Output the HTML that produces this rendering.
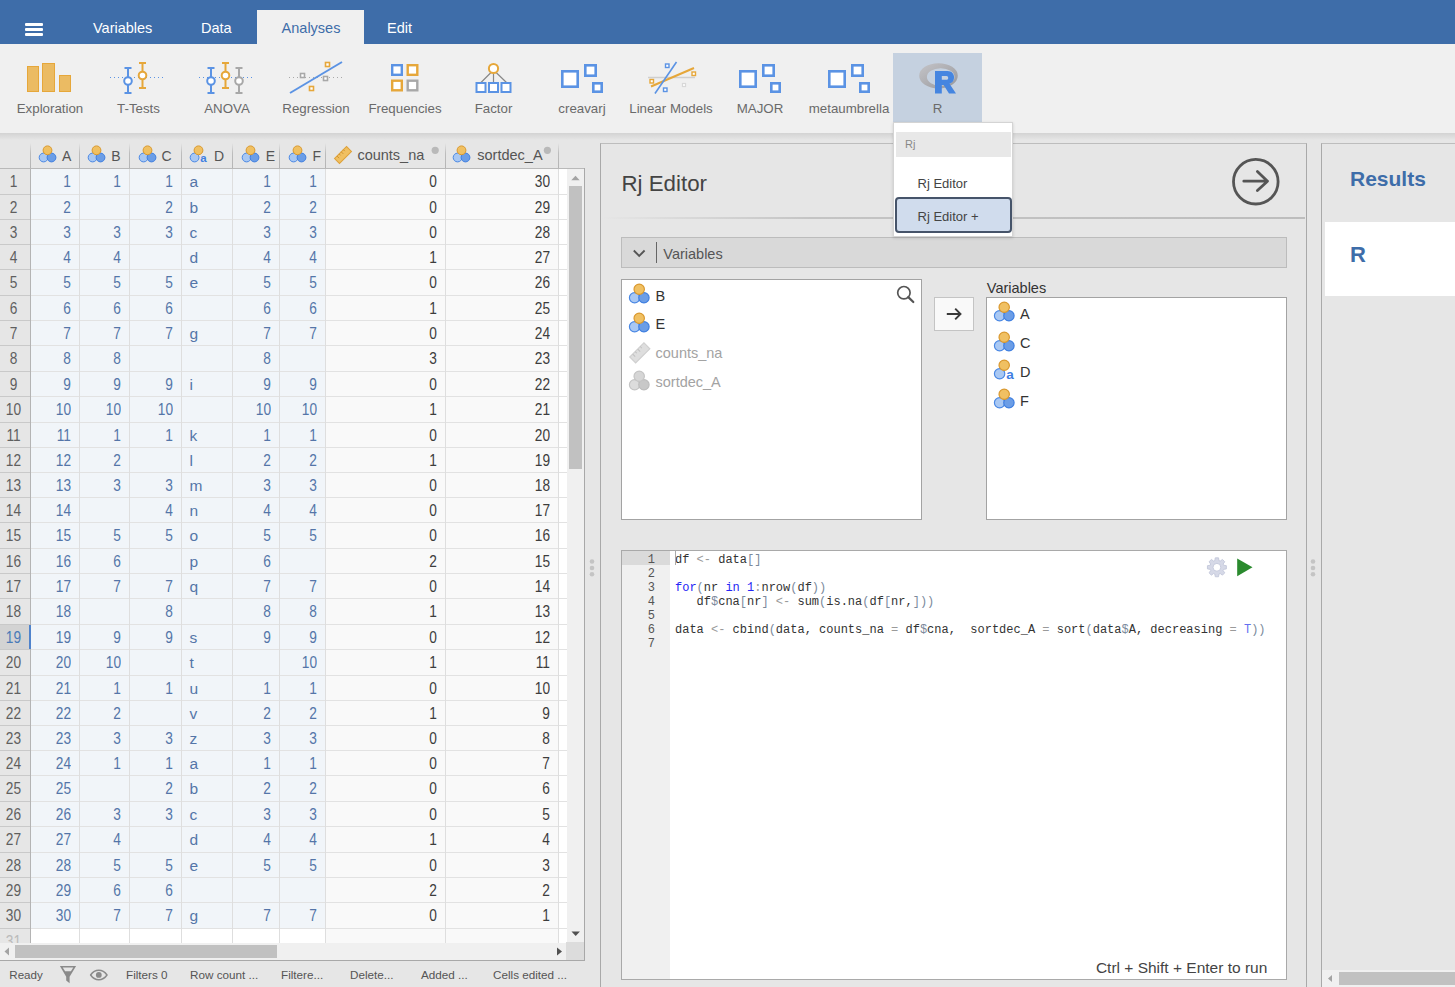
<!DOCTYPE html><html><head><meta charset="utf-8"><style>
*{box-sizing:border-box;margin:0;padding:0}
html,body{width:1455px;height:987px;overflow:hidden;background:#e6e6e6;font-family:"Liberation Sans",sans-serif;position:relative}
.abs{position:absolute}
.t{position:absolute;white-space:nowrap}
</style></head><body>
<div class="abs" style="left:0;top:0;width:1455px;height:44px;background:#3e6da9"></div><div class="abs" style="left:25px;top:23px;width:18px;height:3px;background:#fff;border-radius:1px"></div><div class="abs" style="left:25px;top:28px;width:18px;height:3px;background:#fff;border-radius:1px"></div><div class="abs" style="left:25px;top:33px;width:18px;height:3px;background:#fff;border-radius:1px"></div><div class="abs" style="left:257px;top:10px;width:107px;height:34px;background:#f0f0f0"></div><div class="t" style="left:93px;top:19.76px;font-size:14.5px;color:#fff;">Variables</div><div class="t" style="left:201px;top:19.76px;font-size:14.5px;color:#fff;">Data</div><div class="t" style="left:281.6px;top:19.76px;font-size:14.5px;color:#3e6da9;">Analyses</div><div class="t" style="left:387px;top:19.76px;font-size:14.5px;color:#fff;">Edit</div><div class="abs" style="left:0;top:44px;width:1455px;height:89px;background:#f0f0f0"></div><div class="abs" style="left:0;top:133px;width:1455px;height:7px;background:linear-gradient(#d3d3d3,#e6e6e6)"></div><div class="abs" style="left:893px;top:53px;width:89px;height:70px;background:#c5d1e0"></div><div class="t" style="left:-10px;top:101.46px;font-size:13.3px;color:#6a6a6a;width:120px;text-align:center">Exploration</div><div class="t" style="left:78.5px;top:101.46px;font-size:13.3px;color:#6a6a6a;width:120px;text-align:center">T-Tests</div><div class="t" style="left:167px;top:101.46px;font-size:13.3px;color:#6a6a6a;width:120px;text-align:center">ANOVA</div><div class="t" style="left:256px;top:101.46px;font-size:13.3px;color:#6a6a6a;width:120px;text-align:center">Regression</div><div class="t" style="left:345px;top:101.46px;font-size:13.3px;color:#6a6a6a;width:120px;text-align:center">Frequencies</div><div class="t" style="left:433.5px;top:101.46px;font-size:13.3px;color:#6a6a6a;width:120px;text-align:center">Factor</div><div class="t" style="left:522px;top:101.46px;font-size:13.3px;color:#6a6a6a;width:120px;text-align:center">creavarj</div><div class="t" style="left:611px;top:101.46px;font-size:13.3px;color:#6a6a6a;width:120px;text-align:center">Linear Models</div><div class="t" style="left:700px;top:101.46px;font-size:13.3px;color:#6a6a6a;width:120px;text-align:center">MAJOR</div><div class="t" style="left:789px;top:101.46px;font-size:13.3px;color:#6a6a6a;width:120px;text-align:center">metaumbrella</div><div class="t" style="left:877.5px;top:101.46px;font-size:13.3px;color:#6a6a6a;width:120px;text-align:center">R</div><svg class="abs" style="left:0;top:0" width="1455" height="140"><rect x="27.5" y="66.5" width="11" height="25" fill="#ebbb63" stroke="#e6a73a"/><rect x="42.5" y="63.5" width="12" height="28" fill="#ebbb63" stroke="#e6a73a"/><rect x="59.5" y="75.5" width="11" height="16" fill="#ebbb63" stroke="#e6a73a"/><path d="M110 77.5h54" stroke="#5b93e4" stroke-width="1" stroke-dasharray="1 3"/><path d="M128 68v25M124.5 68h7M124.5 93h7" stroke="#5b93e4" stroke-width="2" fill="none"/><circle cx="128" cy="81" r="3.8" fill="#fff" stroke="#5b93e4" stroke-width="2"/><path d="M142.5 63v25M139.0 63h7M139.0 88h7" stroke="#e6a73a" stroke-width="2" fill="none"/><circle cx="142.5" cy="75.5" r="3.8" fill="#fff" stroke="#e6a73a" stroke-width="2"/><path d="M199 77.5h54" stroke="#5b93e4" stroke-width="1" stroke-dasharray="1 3"/><path d="M211 68v25M207.5 68h7M207.5 93h7" stroke="#5b93e4" stroke-width="2" fill="none"/><circle cx="211" cy="81" r="3.8" fill="#fff" stroke="#5b93e4" stroke-width="2"/><path d="M225.5 63v25M222.0 63h7M222.0 88h7" stroke="#e6a73a" stroke-width="2" fill="none"/><circle cx="225.5" cy="75.5" r="3.8" fill="#fff" stroke="#e6a73a" stroke-width="2"/><path d="M239 68v25M235.5 68h7M235.5 93h7" stroke="#a8a8a8" stroke-width="2" fill="none"/><circle cx="239" cy="81" r="3.8" fill="#fff" stroke="#a8a8a8" stroke-width="2"/><path d="M289 77.5h54" stroke="#a8a8a8" stroke-width="1" stroke-dasharray="1 3"/><path d="M290 93L342 62" stroke="#5b93e4" stroke-width="2"/><rect x="300.5" y="73.5" width="4" height="4" fill="#fff" stroke="#a8a8a8" stroke-width="1.6"/><rect x="323.5" y="76.5" width="4" height="4" fill="#fff" stroke="#a8a8a8" stroke-width="1.6"/><rect x="309.5" y="86.5" width="4" height="4" fill="#fff" stroke="#e6a73a" stroke-width="1.6"/><rect x="325.5" y="62.5" width="4" height="4" fill="#fff" stroke="#e6a73a" stroke-width="1.6"/><rect x="392.2" y="65.2" width="9.6" height="9.6" fill="#fff" stroke="#5b93e4" stroke-width="2.4"/><rect x="407.7" y="65.2" width="9.6" height="9.6" fill="#fff" stroke="#e6a73a" stroke-width="2.4"/><rect x="392.2" y="80.7" width="9.6" height="9.6" fill="#fff" stroke="#e6a73a" stroke-width="2.4"/><rect x="407.7" y="80.7" width="9.6" height="9.6" fill="#fff" stroke="#a8a8a8" stroke-width="2.4"/><path d="M493.5 70L480.5 83M493.5 70V83M493.5 70L507 83" stroke="#888" stroke-width="1.2"/><circle cx="493.5" cy="68.5" r="4.6" fill="#fff" stroke="#e6a73a" stroke-width="2"/><rect x="476.5" y="83.0" width="9" height="9" fill="#fff" stroke="#5b93e4" stroke-width="2"/><rect x="489.0" y="83.0" width="9" height="9" fill="#fff" stroke="#5b93e4" stroke-width="2"/><rect x="501.5" y="83.0" width="9" height="9" fill="#fff" stroke="#5b93e4" stroke-width="2"/><rect x="562.3" y="71.3" width="15.4" height="15.4" fill="#fff" stroke="#5b93e4" stroke-width="2.6"/><rect x="585.3" y="65.3" width="10.4" height="10.4" fill="#fff" stroke="#5b93e4" stroke-width="2.6"/><rect x="593.3" y="83.3" width="8.4" height="8.4" fill="#fff" stroke="#5b93e4" stroke-width="2.6"/><rect x="740.3" y="71.3" width="15.4" height="15.4" fill="#fff" stroke="#5b93e4" stroke-width="2.6"/><rect x="763.3" y="65.3" width="10.4" height="10.4" fill="#fff" stroke="#5b93e4" stroke-width="2.6"/><rect x="771.3" y="83.3" width="8.4" height="8.4" fill="#fff" stroke="#5b93e4" stroke-width="2.6"/><rect x="829.3" y="71.3" width="15.4" height="15.4" fill="#fff" stroke="#5b93e4" stroke-width="2.6"/><rect x="852.3" y="65.3" width="10.4" height="10.4" fill="#fff" stroke="#5b93e4" stroke-width="2.6"/><rect x="860.3" y="83.3" width="8.4" height="8.4" fill="#fff" stroke="#5b93e4" stroke-width="2.6"/><path d="M648 77.5h47" stroke="#cfcfcf" stroke-width="1.4"/><path d="M651 86.5L694 68" stroke="#e6a73a" stroke-width="2"/><path d="M655 93.5L676.5 62" stroke="#5b93e4" stroke-width="1.6"/><rect x="650" y="79.5" width="3.5" height="3.5" fill="#fff" stroke="#e6a73a" stroke-width="1.4"/><rect x="692" y="72" width="3.5" height="3.5" fill="#fff" stroke="#e6a73a" stroke-width="1.4"/><rect x="665.5" y="64" width="3.5" height="3.5" fill="#fff" stroke="#5b93e4" stroke-width="1.4"/><rect x="663.5" y="88" width="3.5" height="3.5" fill="#fff" stroke="#5b93e4" stroke-width="1.4"/><rect x="682.5" y="83.5" width="3" height="3" fill="#fff" stroke="#d8d8d8" stroke-width="1.2"/><defs><linearGradient id="rg" x1="0" y1="0" x2="1" y2="1"><stop offset="0" stop-color="#c4c4c8"/><stop offset="1" stop-color="#98989c"/></linearGradient></defs><path fill-rule="evenodd" fill="url(#rg)" d="M919.2 75.8a19.3 12.6 0 1 0 38.6 0a19.3 12.6 0 1 0 -38.6 0ZM926.9 77a13.8 8.7 0 1 0 27.6 0a13.8 8.7 0 1 0 -27.6 0Z"/><path fill-rule="evenodd" fill="#4585e0" d="M935 71.1H947.5C951.8 71.1 954.1 74 954.1 77.4C954.1 80.4 952.4 82.8 949.5 83.7L956 93.4H949L943.6 84.9H941.8V93.4H935ZM941.8 76H946.5C947.6 76 948.2 76.8 948.2 77.9C948.2 79 947.6 79.8 946.5 79.8H941.8Z"/></svg><div class="abs" style="left:0;top:143px;width:567px;height:26px;background:#e6e6e6"></div><div class="abs" style="left:30px;top:143px;width:1px;height:25px;background:linear-gradient(rgba(190,190,190,0),#bdbdbd 40%,#b4b4b4)"></div><div class="abs" style="left:79px;top:143px;width:1px;height:25px;background:linear-gradient(rgba(190,190,190,0),#bdbdbd 40%,#b4b4b4)"></div><div class="abs" style="left:129px;top:143px;width:1px;height:25px;background:linear-gradient(rgba(190,190,190,0),#bdbdbd 40%,#b4b4b4)"></div><div class="abs" style="left:181px;top:143px;width:1px;height:25px;background:linear-gradient(rgba(190,190,190,0),#bdbdbd 40%,#b4b4b4)"></div><div class="abs" style="left:232px;top:143px;width:1px;height:25px;background:linear-gradient(rgba(190,190,190,0),#bdbdbd 40%,#b4b4b4)"></div><div class="abs" style="left:279px;top:143px;width:1px;height:25px;background:linear-gradient(rgba(190,190,190,0),#bdbdbd 40%,#b4b4b4)"></div><div class="abs" style="left:325px;top:143px;width:1px;height:25px;background:linear-gradient(rgba(190,190,190,0),#bdbdbd 40%,#b4b4b4)"></div><div class="abs" style="left:445px;top:143px;width:1px;height:25px;background:linear-gradient(rgba(190,190,190,0),#bdbdbd 40%,#b4b4b4)"></div><div class="abs" style="left:558px;top:143px;width:1px;height:25px;background:linear-gradient(rgba(190,190,190,0),#bdbdbd 40%,#b4b4b4)"></div><div class="abs" style="left:0;top:168px;width:585px;height:1px;background:#b9b9b9"></div><div class="abs" style="left:37.8px;top:145.3px"><svg width="20.00" height="18.00" viewBox="0 0 20 18" style="display:block"><circle cx="5.6" cy="12.5" r="4.4" fill="#a9c8f3" stroke="#4a88e4" stroke-width="1"/><circle cx="13.5" cy="12.5" r="4.4" fill="#6b9de6" stroke="#3f7fe0" stroke-width="1"/><circle cx="9.5" cy="5.3" r="4.4" fill="#f0c062" stroke="#d9982e" stroke-width="1"/></svg></div><div class="t" style="left:62px;top:147.92px;font-size:14px;color:#555;">A</div><div class="abs" style="left:86.5px;top:145.3px"><svg width="20.00" height="18.00" viewBox="0 0 20 18" style="display:block"><circle cx="5.6" cy="12.5" r="4.4" fill="#a9c8f3" stroke="#4a88e4" stroke-width="1"/><circle cx="13.5" cy="12.5" r="4.4" fill="#6b9de6" stroke="#3f7fe0" stroke-width="1"/><circle cx="9.5" cy="5.3" r="4.4" fill="#f0c062" stroke="#d9982e" stroke-width="1"/></svg></div><div class="t" style="left:111.3px;top:147.92px;font-size:14px;color:#555;">B</div><div class="abs" style="left:137.8px;top:145.3px"><svg width="20.00" height="18.00" viewBox="0 0 20 18" style="display:block"><circle cx="5.6" cy="12.5" r="4.4" fill="#a9c8f3" stroke="#4a88e4" stroke-width="1"/><circle cx="13.5" cy="12.5" r="4.4" fill="#6b9de6" stroke="#3f7fe0" stroke-width="1"/><circle cx="9.5" cy="5.3" r="4.4" fill="#f0c062" stroke="#d9982e" stroke-width="1"/></svg></div><div class="t" style="left:161.5px;top:147.92px;font-size:14px;color:#555;">C</div><div class="abs" style="left:188.8px;top:145.3px"><svg width="20.00" height="18.00" viewBox="0 0 20 18" style="display:block"><circle cx="5.6" cy="12.5" r="4.4" fill="#a9c8f3" stroke="#4a88e4" stroke-width="1"/><text x="11.2" y="17" font-family="Liberation Sans" font-weight="bold" font-size="11.5" fill="#3f80e2">a</text><circle cx="9.5" cy="5.3" r="4.4" fill="#f0c062" stroke="#d9982e" stroke-width="1"/></svg></div><div class="t" style="left:214px;top:147.92px;font-size:14px;color:#555;">D</div><div class="abs" style="left:240.9px;top:145.3px"><svg width="20.00" height="18.00" viewBox="0 0 20 18" style="display:block"><circle cx="5.6" cy="12.5" r="4.4" fill="#a9c8f3" stroke="#4a88e4" stroke-width="1"/><circle cx="13.5" cy="12.5" r="4.4" fill="#6b9de6" stroke="#3f7fe0" stroke-width="1"/><circle cx="9.5" cy="5.3" r="4.4" fill="#f0c062" stroke="#d9982e" stroke-width="1"/></svg></div><div class="t" style="left:265.7px;top:147.92px;font-size:14px;color:#555;">E</div><div class="abs" style="left:288.0px;top:145.3px"><svg width="20.00" height="18.00" viewBox="0 0 20 18" style="display:block"><circle cx="5.6" cy="12.5" r="4.4" fill="#a9c8f3" stroke="#4a88e4" stroke-width="1"/><circle cx="13.5" cy="12.5" r="4.4" fill="#6b9de6" stroke="#3f7fe0" stroke-width="1"/><circle cx="9.5" cy="5.3" r="4.4" fill="#f0c062" stroke="#d9982e" stroke-width="1"/></svg></div><div class="t" style="left:312.6px;top:147.92px;font-size:14px;color:#555;">F</div><div class="abs" style="left:332.8px;top:145.3px"><svg width="20.00" height="20.00" viewBox="0 0 20 20" style="display:block"><g transform="rotate(-45 10 10)"><rect x="1.5" y="6.5" width="17" height="7" fill="#f0c062" stroke="#dea13a"/><path d="M5 6.5v3M8 6.5v2M11 6.5v3M14 6.5v2" stroke="#c88a2a" stroke-width="0.8"/></g></svg></div><div class="t" style="left:357.4px;top:147.46px;font-size:14.5px;color:#555;">counts_na</div><div class="abs" style="left:452.4px;top:145.3px"><svg width="20.00" height="18.00" viewBox="0 0 20 18" style="display:block"><circle cx="5.6" cy="12.5" r="4.4" fill="#a9c8f3" stroke="#4a88e4" stroke-width="1"/><circle cx="13.5" cy="12.5" r="4.4" fill="#6b9de6" stroke="#3f7fe0" stroke-width="1"/><circle cx="9.5" cy="5.3" r="4.4" fill="#f0c062" stroke="#d9982e" stroke-width="1"/></svg></div><div class="t" style="left:477.3px;top:147.46px;font-size:14.5px;color:#555;">sortdec_A</div><div class="abs" style="left:31px;top:169px;width:49px;height:759px;background:#f1f5f9"></div><div class="abs" style="left:80px;top:169px;width:50px;height:759px;background:#f1f5f9"></div><div class="abs" style="left:130px;top:169px;width:52px;height:759px;background:#f1f5f9"></div><div class="abs" style="left:182px;top:169px;width:51px;height:759px;background:#f1f5f9"></div><div class="abs" style="left:233px;top:169px;width:47px;height:759px;background:#f1f5f9"></div><div class="abs" style="left:280px;top:169px;width:46px;height:759px;background:#f1f5f9"></div><div class="abs" style="left:326px;top:169px;width:120px;height:759px;background:#f9f9f9"></div><div class="abs" style="left:446px;top:169px;width:113px;height:759px;background:#f9f9f9"></div><div class="abs" style="left:31px;top:929px;width:295px;height:14px;background:#fff"></div><div class="abs" style="left:326px;top:929px;width:232px;height:14px;background:#f9f9f9"></div><div class="abs" style="left:558px;top:169px;width:9px;height:774px;background:#fff"></div><div class="abs" style="left:0;top:169px;width:30px;height:774px;background:#e6e6e6"></div><div class="abs" style="left:0;top:194px;width:30px;height:1px;background:#c9c9c9"></div><div class="abs" style="left:31px;top:194px;width:536px;height:1px;background:#e2e2e2"></div><div class="abs" style="left:0;top:219px;width:30px;height:1px;background:#c9c9c9"></div><div class="abs" style="left:31px;top:219px;width:536px;height:1px;background:#e2e2e2"></div><div class="abs" style="left:0;top:244px;width:30px;height:1px;background:#c9c9c9"></div><div class="abs" style="left:31px;top:244px;width:536px;height:1px;background:#e2e2e2"></div><div class="abs" style="left:0;top:269px;width:30px;height:1px;background:#c9c9c9"></div><div class="abs" style="left:31px;top:269px;width:536px;height:1px;background:#e2e2e2"></div><div class="abs" style="left:0;top:295px;width:30px;height:1px;background:#c9c9c9"></div><div class="abs" style="left:31px;top:295px;width:536px;height:1px;background:#e2e2e2"></div><div class="abs" style="left:0;top:320px;width:30px;height:1px;background:#c9c9c9"></div><div class="abs" style="left:31px;top:320px;width:536px;height:1px;background:#e2e2e2"></div><div class="abs" style="left:0;top:345px;width:30px;height:1px;background:#c9c9c9"></div><div class="abs" style="left:31px;top:345px;width:536px;height:1px;background:#e2e2e2"></div><div class="abs" style="left:0;top:371px;width:30px;height:1px;background:#c9c9c9"></div><div class="abs" style="left:31px;top:371px;width:536px;height:1px;background:#e2e2e2"></div><div class="abs" style="left:0;top:396px;width:30px;height:1px;background:#c9c9c9"></div><div class="abs" style="left:31px;top:396px;width:536px;height:1px;background:#e2e2e2"></div><div class="abs" style="left:0;top:422px;width:30px;height:1px;background:#c9c9c9"></div><div class="abs" style="left:31px;top:422px;width:536px;height:1px;background:#e2e2e2"></div><div class="abs" style="left:0;top:447px;width:30px;height:1px;background:#c9c9c9"></div><div class="abs" style="left:31px;top:447px;width:536px;height:1px;background:#e2e2e2"></div><div class="abs" style="left:0;top:472px;width:30px;height:1px;background:#c9c9c9"></div><div class="abs" style="left:31px;top:472px;width:536px;height:1px;background:#e2e2e2"></div><div class="abs" style="left:0;top:497px;width:30px;height:1px;background:#c9c9c9"></div><div class="abs" style="left:31px;top:497px;width:536px;height:1px;background:#e2e2e2"></div><div class="abs" style="left:0;top:522px;width:30px;height:1px;background:#c9c9c9"></div><div class="abs" style="left:31px;top:522px;width:536px;height:1px;background:#e2e2e2"></div><div class="abs" style="left:0;top:548px;width:30px;height:1px;background:#c9c9c9"></div><div class="abs" style="left:31px;top:548px;width:536px;height:1px;background:#e2e2e2"></div><div class="abs" style="left:0;top:573px;width:30px;height:1px;background:#c9c9c9"></div><div class="abs" style="left:31px;top:573px;width:536px;height:1px;background:#e2e2e2"></div><div class="abs" style="left:0;top:598px;width:30px;height:1px;background:#c9c9c9"></div><div class="abs" style="left:31px;top:598px;width:536px;height:1px;background:#e2e2e2"></div><div class="abs" style="left:0;top:624px;width:30px;height:1px;background:#c9c9c9"></div><div class="abs" style="left:31px;top:624px;width:536px;height:1px;background:#e2e2e2"></div><div class="abs" style="left:0;top:649px;width:30px;height:1px;background:#c9c9c9"></div><div class="abs" style="left:31px;top:649px;width:536px;height:1px;background:#e2e2e2"></div><div class="abs" style="left:0;top:675px;width:30px;height:1px;background:#c9c9c9"></div><div class="abs" style="left:31px;top:675px;width:536px;height:1px;background:#e2e2e2"></div><div class="abs" style="left:0;top:700px;width:30px;height:1px;background:#c9c9c9"></div><div class="abs" style="left:31px;top:700px;width:536px;height:1px;background:#e2e2e2"></div><div class="abs" style="left:0;top:725px;width:30px;height:1px;background:#c9c9c9"></div><div class="abs" style="left:31px;top:725px;width:536px;height:1px;background:#e2e2e2"></div><div class="abs" style="left:0;top:750px;width:30px;height:1px;background:#c9c9c9"></div><div class="abs" style="left:31px;top:750px;width:536px;height:1px;background:#e2e2e2"></div><div class="abs" style="left:0;top:775px;width:30px;height:1px;background:#c9c9c9"></div><div class="abs" style="left:31px;top:775px;width:536px;height:1px;background:#e2e2e2"></div><div class="abs" style="left:0;top:801px;width:30px;height:1px;background:#c9c9c9"></div><div class="abs" style="left:31px;top:801px;width:536px;height:1px;background:#e2e2e2"></div><div class="abs" style="left:0;top:826px;width:30px;height:1px;background:#c9c9c9"></div><div class="abs" style="left:31px;top:826px;width:536px;height:1px;background:#e2e2e2"></div><div class="abs" style="left:0;top:852px;width:30px;height:1px;background:#c9c9c9"></div><div class="abs" style="left:31px;top:852px;width:536px;height:1px;background:#e2e2e2"></div><div class="abs" style="left:0;top:877px;width:30px;height:1px;background:#c9c9c9"></div><div class="abs" style="left:31px;top:877px;width:536px;height:1px;background:#e2e2e2"></div><div class="abs" style="left:0;top:902px;width:30px;height:1px;background:#c9c9c9"></div><div class="abs" style="left:31px;top:902px;width:536px;height:1px;background:#e2e2e2"></div><div class="abs" style="left:0;top:928px;width:30px;height:1px;background:#c9c9c9"></div><div class="abs" style="left:31px;top:928px;width:536px;height:1px;background:#e2e2e2"></div><div class="abs" style="left:79px;top:169px;width:1px;height:774px;background:#dedede"></div><div class="abs" style="left:129px;top:169px;width:1px;height:774px;background:#dedede"></div><div class="abs" style="left:181px;top:169px;width:1px;height:774px;background:#dedede"></div><div class="abs" style="left:232px;top:169px;width:1px;height:774px;background:#dedede"></div><div class="abs" style="left:279px;top:169px;width:1px;height:774px;background:#dedede"></div><div class="abs" style="left:325px;top:169px;width:1px;height:774px;background:#dedede"></div><div class="abs" style="left:445px;top:169px;width:1px;height:774px;background:#dedede"></div><div class="abs" style="left:558px;top:169px;width:1px;height:774px;background:#dedede"></div><div class="abs" style="left:30px;top:169px;width:1px;height:774px;background:#b4b4b4"></div><div class="abs" style="left:0;top:625px;width:30px;height:24px;background:#d3d3d3"></div><div class="abs" style="left:29px;top:625px;width:2px;height:24px;background:#4f83cc"></div><style>.cr{position:absolute;white-space:nowrap;font-size:16.5px;line-height:18px;transform:scaleX(.83);transform-origin:100% 50%;text-align:right}.cl{position:absolute;white-space:nowrap;font-size:15.5px;line-height:18px}.cc{position:absolute;white-space:nowrap;font-size:16.5px;line-height:18px;transform:scaleX(.83);text-align:center}</style><div class="cc" style="left:0;width:27px;top:172.3px;color:#5f5f5f">1</div><div class="cr" style="left:30px;width:41px;top:172.3px;color:#5475a8">1</div><div class="cr" style="left:79px;width:42px;top:172.3px;color:#5475a8">1</div><div class="cr" style="left:129px;width:44px;top:172.3px;color:#5475a8">1</div><div class="cl" style="left:189.5px;top:172.7px;color:#5475a8">a</div><div class="cr" style="left:232px;width:39px;top:172.3px;color:#5475a8">1</div><div class="cr" style="left:279px;width:38px;top:172.3px;color:#5475a8">1</div><div class="cr" style="left:325px;width:112px;top:172.3px;color:#3d3d3d">0</div><div class="cr" style="left:445px;width:105px;top:172.3px;color:#3d3d3d">30</div><div class="cc" style="left:0;width:27px;top:198.3px;color:#5f5f5f">2</div><div class="cr" style="left:30px;width:41px;top:198.3px;color:#5475a8">2</div><div class="cr" style="left:129px;width:44px;top:198.3px;color:#5475a8">2</div><div class="cl" style="left:189.5px;top:198.7px;color:#5475a8">b</div><div class="cr" style="left:232px;width:39px;top:198.3px;color:#5475a8">2</div><div class="cr" style="left:279px;width:38px;top:198.3px;color:#5475a8">2</div><div class="cr" style="left:325px;width:112px;top:198.3px;color:#3d3d3d">0</div><div class="cr" style="left:445px;width:105px;top:198.3px;color:#3d3d3d">29</div><div class="cc" style="left:0;width:27px;top:223.3px;color:#5f5f5f">3</div><div class="cr" style="left:30px;width:41px;top:223.3px;color:#5475a8">3</div><div class="cr" style="left:79px;width:42px;top:223.3px;color:#5475a8">3</div><div class="cr" style="left:129px;width:44px;top:223.3px;color:#5475a8">3</div><div class="cl" style="left:189.5px;top:223.7px;color:#5475a8">c</div><div class="cr" style="left:232px;width:39px;top:223.3px;color:#5475a8">3</div><div class="cr" style="left:279px;width:38px;top:223.3px;color:#5475a8">3</div><div class="cr" style="left:325px;width:112px;top:223.3px;color:#3d3d3d">0</div><div class="cr" style="left:445px;width:105px;top:223.3px;color:#3d3d3d">28</div><div class="cc" style="left:0;width:27px;top:248.3px;color:#5f5f5f">4</div><div class="cr" style="left:30px;width:41px;top:248.3px;color:#5475a8">4</div><div class="cr" style="left:79px;width:42px;top:248.3px;color:#5475a8">4</div><div class="cl" style="left:189.5px;top:248.7px;color:#5475a8">d</div><div class="cr" style="left:232px;width:39px;top:248.3px;color:#5475a8">4</div><div class="cr" style="left:279px;width:38px;top:248.3px;color:#5475a8">4</div><div class="cr" style="left:325px;width:112px;top:248.3px;color:#3d3d3d">1</div><div class="cr" style="left:445px;width:105px;top:248.3px;color:#3d3d3d">27</div><div class="cc" style="left:0;width:27px;top:273.3px;color:#5f5f5f">5</div><div class="cr" style="left:30px;width:41px;top:273.3px;color:#5475a8">5</div><div class="cr" style="left:79px;width:42px;top:273.3px;color:#5475a8">5</div><div class="cr" style="left:129px;width:44px;top:273.3px;color:#5475a8">5</div><div class="cl" style="left:189.5px;top:273.6px;color:#5475a8">e</div><div class="cr" style="left:232px;width:39px;top:273.3px;color:#5475a8">5</div><div class="cr" style="left:279px;width:38px;top:273.3px;color:#5475a8">5</div><div class="cr" style="left:325px;width:112px;top:273.3px;color:#3d3d3d">0</div><div class="cr" style="left:445px;width:105px;top:273.3px;color:#3d3d3d">26</div><div class="cc" style="left:0;width:27px;top:299.3px;color:#5f5f5f">6</div><div class="cr" style="left:30px;width:41px;top:299.3px;color:#5475a8">6</div><div class="cr" style="left:79px;width:42px;top:299.3px;color:#5475a8">6</div><div class="cr" style="left:129px;width:44px;top:299.3px;color:#5475a8">6</div><div class="cr" style="left:232px;width:39px;top:299.3px;color:#5475a8">6</div><div class="cr" style="left:279px;width:38px;top:299.3px;color:#5475a8">6</div><div class="cr" style="left:325px;width:112px;top:299.3px;color:#3d3d3d">1</div><div class="cr" style="left:445px;width:105px;top:299.3px;color:#3d3d3d">25</div><div class="cc" style="left:0;width:27px;top:324.3px;color:#5f5f5f">7</div><div class="cr" style="left:30px;width:41px;top:324.3px;color:#5475a8">7</div><div class="cr" style="left:79px;width:42px;top:324.3px;color:#5475a8">7</div><div class="cr" style="left:129px;width:44px;top:324.3px;color:#5475a8">7</div><div class="cl" style="left:189.5px;top:324.6px;color:#5475a8">g</div><div class="cr" style="left:232px;width:39px;top:324.3px;color:#5475a8">7</div><div class="cr" style="left:279px;width:38px;top:324.3px;color:#5475a8">7</div><div class="cr" style="left:325px;width:112px;top:324.3px;color:#3d3d3d">0</div><div class="cr" style="left:445px;width:105px;top:324.3px;color:#3d3d3d">24</div><div class="cc" style="left:0;width:27px;top:349.3px;color:#5f5f5f">8</div><div class="cr" style="left:30px;width:41px;top:349.3px;color:#5475a8">8</div><div class="cr" style="left:79px;width:42px;top:349.3px;color:#5475a8">8</div><div class="cr" style="left:232px;width:39px;top:349.3px;color:#5475a8">8</div><div class="cr" style="left:325px;width:112px;top:349.3px;color:#3d3d3d">3</div><div class="cr" style="left:445px;width:105px;top:349.3px;color:#3d3d3d">23</div><div class="cc" style="left:0;width:27px;top:375.3px;color:#5f5f5f">9</div><div class="cr" style="left:30px;width:41px;top:375.3px;color:#5475a8">9</div><div class="cr" style="left:79px;width:42px;top:375.3px;color:#5475a8">9</div><div class="cr" style="left:129px;width:44px;top:375.3px;color:#5475a8">9</div><div class="cl" style="left:189.5px;top:375.6px;color:#5475a8">i</div><div class="cr" style="left:232px;width:39px;top:375.3px;color:#5475a8">9</div><div class="cr" style="left:279px;width:38px;top:375.3px;color:#5475a8">9</div><div class="cr" style="left:325px;width:112px;top:375.3px;color:#3d3d3d">0</div><div class="cr" style="left:445px;width:105px;top:375.3px;color:#3d3d3d">22</div><div class="cc" style="left:0;width:27px;top:400.3px;color:#5f5f5f">10</div><div class="cr" style="left:30px;width:41px;top:400.3px;color:#5475a8">10</div><div class="cr" style="left:79px;width:42px;top:400.3px;color:#5475a8">10</div><div class="cr" style="left:129px;width:44px;top:400.3px;color:#5475a8">10</div><div class="cr" style="left:232px;width:39px;top:400.3px;color:#5475a8">10</div><div class="cr" style="left:279px;width:38px;top:400.3px;color:#5475a8">10</div><div class="cr" style="left:325px;width:112px;top:400.3px;color:#3d3d3d">1</div><div class="cr" style="left:445px;width:105px;top:400.3px;color:#3d3d3d">21</div><div class="cc" style="left:0;width:27px;top:426.3px;color:#5f5f5f">11</div><div class="cr" style="left:30px;width:41px;top:426.3px;color:#5475a8">11</div><div class="cr" style="left:79px;width:42px;top:426.3px;color:#5475a8">1</div><div class="cr" style="left:129px;width:44px;top:426.3px;color:#5475a8">1</div><div class="cl" style="left:189.5px;top:426.6px;color:#5475a8">k</div><div class="cr" style="left:232px;width:39px;top:426.3px;color:#5475a8">1</div><div class="cr" style="left:279px;width:38px;top:426.3px;color:#5475a8">1</div><div class="cr" style="left:325px;width:112px;top:426.3px;color:#3d3d3d">0</div><div class="cr" style="left:445px;width:105px;top:426.3px;color:#3d3d3d">20</div><div class="cc" style="left:0;width:27px;top:451.3px;color:#5f5f5f">12</div><div class="cr" style="left:30px;width:41px;top:451.3px;color:#5475a8">12</div><div class="cr" style="left:79px;width:42px;top:451.3px;color:#5475a8">2</div><div class="cl" style="left:189.5px;top:451.6px;color:#5475a8">l</div><div class="cr" style="left:232px;width:39px;top:451.3px;color:#5475a8">2</div><div class="cr" style="left:279px;width:38px;top:451.3px;color:#5475a8">2</div><div class="cr" style="left:325px;width:112px;top:451.3px;color:#3d3d3d">1</div><div class="cr" style="left:445px;width:105px;top:451.3px;color:#3d3d3d">19</div><div class="cc" style="left:0;width:27px;top:476.3px;color:#5f5f5f">13</div><div class="cr" style="left:30px;width:41px;top:476.3px;color:#5475a8">13</div><div class="cr" style="left:79px;width:42px;top:476.3px;color:#5475a8">3</div><div class="cr" style="left:129px;width:44px;top:476.3px;color:#5475a8">3</div><div class="cl" style="left:189.5px;top:476.6px;color:#5475a8">m</div><div class="cr" style="left:232px;width:39px;top:476.3px;color:#5475a8">3</div><div class="cr" style="left:279px;width:38px;top:476.3px;color:#5475a8">3</div><div class="cr" style="left:325px;width:112px;top:476.3px;color:#3d3d3d">0</div><div class="cr" style="left:445px;width:105px;top:476.3px;color:#3d3d3d">18</div><div class="cc" style="left:0;width:27px;top:501.3px;color:#5f5f5f">14</div><div class="cr" style="left:30px;width:41px;top:501.3px;color:#5475a8">14</div><div class="cr" style="left:129px;width:44px;top:501.3px;color:#5475a8">4</div><div class="cl" style="left:189.5px;top:501.7px;color:#5475a8">n</div><div class="cr" style="left:232px;width:39px;top:501.3px;color:#5475a8">4</div><div class="cr" style="left:279px;width:38px;top:501.3px;color:#5475a8">4</div><div class="cr" style="left:325px;width:112px;top:501.3px;color:#3d3d3d">0</div><div class="cr" style="left:445px;width:105px;top:501.3px;color:#3d3d3d">17</div><div class="cc" style="left:0;width:27px;top:526.3px;color:#5f5f5f">15</div><div class="cr" style="left:30px;width:41px;top:526.3px;color:#5475a8">15</div><div class="cr" style="left:79px;width:42px;top:526.3px;color:#5475a8">5</div><div class="cr" style="left:129px;width:44px;top:526.3px;color:#5475a8">5</div><div class="cl" style="left:189.5px;top:526.7px;color:#5475a8">o</div><div class="cr" style="left:232px;width:39px;top:526.3px;color:#5475a8">5</div><div class="cr" style="left:279px;width:38px;top:526.3px;color:#5475a8">5</div><div class="cr" style="left:325px;width:112px;top:526.3px;color:#3d3d3d">0</div><div class="cr" style="left:445px;width:105px;top:526.3px;color:#3d3d3d">16</div><div class="cc" style="left:0;width:27px;top:552.3px;color:#5f5f5f">16</div><div class="cr" style="left:30px;width:41px;top:552.3px;color:#5475a8">16</div><div class="cr" style="left:79px;width:42px;top:552.3px;color:#5475a8">6</div><div class="cl" style="left:189.5px;top:552.7px;color:#5475a8">p</div><div class="cr" style="left:232px;width:39px;top:552.3px;color:#5475a8">6</div><div class="cr" style="left:325px;width:112px;top:552.3px;color:#3d3d3d">2</div><div class="cr" style="left:445px;width:105px;top:552.3px;color:#3d3d3d">15</div><div class="cc" style="left:0;width:27px;top:577.3px;color:#5f5f5f">17</div><div class="cr" style="left:30px;width:41px;top:577.3px;color:#5475a8">17</div><div class="cr" style="left:79px;width:42px;top:577.3px;color:#5475a8">7</div><div class="cr" style="left:129px;width:44px;top:577.3px;color:#5475a8">7</div><div class="cl" style="left:189.5px;top:577.7px;color:#5475a8">q</div><div class="cr" style="left:232px;width:39px;top:577.3px;color:#5475a8">7</div><div class="cr" style="left:279px;width:38px;top:577.3px;color:#5475a8">7</div><div class="cr" style="left:325px;width:112px;top:577.3px;color:#3d3d3d">0</div><div class="cr" style="left:445px;width:105px;top:577.3px;color:#3d3d3d">14</div><div class="cc" style="left:0;width:27px;top:602.3px;color:#5f5f5f">18</div><div class="cr" style="left:30px;width:41px;top:602.3px;color:#5475a8">18</div><div class="cr" style="left:129px;width:44px;top:602.3px;color:#5475a8">8</div><div class="cr" style="left:232px;width:39px;top:602.3px;color:#5475a8">8</div><div class="cr" style="left:279px;width:38px;top:602.3px;color:#5475a8">8</div><div class="cr" style="left:325px;width:112px;top:602.3px;color:#3d3d3d">1</div><div class="cr" style="left:445px;width:105px;top:602.3px;color:#3d3d3d">13</div><div class="cc" style="left:0;width:27px;top:628.3px;color:#4a7ab8">19</div><div class="cr" style="left:30px;width:41px;top:628.3px;color:#5475a8">19</div><div class="cr" style="left:79px;width:42px;top:628.3px;color:#5475a8">9</div><div class="cr" style="left:129px;width:44px;top:628.3px;color:#5475a8">9</div><div class="cl" style="left:189.5px;top:628.7px;color:#5475a8">s</div><div class="cr" style="left:232px;width:39px;top:628.3px;color:#5475a8">9</div><div class="cr" style="left:279px;width:38px;top:628.3px;color:#5475a8">9</div><div class="cr" style="left:325px;width:112px;top:628.3px;color:#3d3d3d">0</div><div class="cr" style="left:445px;width:105px;top:628.3px;color:#3d3d3d">12</div><div class="cc" style="left:0;width:27px;top:653.3px;color:#5f5f5f">20</div><div class="cr" style="left:30px;width:41px;top:653.3px;color:#5475a8">20</div><div class="cr" style="left:79px;width:42px;top:653.3px;color:#5475a8">10</div><div class="cl" style="left:189.5px;top:653.7px;color:#5475a8">t</div><div class="cr" style="left:279px;width:38px;top:653.3px;color:#5475a8">10</div><div class="cr" style="left:325px;width:112px;top:653.3px;color:#3d3d3d">1</div><div class="cr" style="left:445px;width:105px;top:653.3px;color:#3d3d3d">11</div><div class="cc" style="left:0;width:27px;top:679.3px;color:#5f5f5f">21</div><div class="cr" style="left:30px;width:41px;top:679.3px;color:#5475a8">21</div><div class="cr" style="left:79px;width:42px;top:679.3px;color:#5475a8">1</div><div class="cr" style="left:129px;width:44px;top:679.3px;color:#5475a8">1</div><div class="cl" style="left:189.5px;top:679.7px;color:#5475a8">u</div><div class="cr" style="left:232px;width:39px;top:679.3px;color:#5475a8">1</div><div class="cr" style="left:279px;width:38px;top:679.3px;color:#5475a8">1</div><div class="cr" style="left:325px;width:112px;top:679.3px;color:#3d3d3d">0</div><div class="cr" style="left:445px;width:105px;top:679.3px;color:#3d3d3d">10</div><div class="cc" style="left:0;width:27px;top:704.3px;color:#5f5f5f">22</div><div class="cr" style="left:30px;width:41px;top:704.3px;color:#5475a8">22</div><div class="cr" style="left:79px;width:42px;top:704.3px;color:#5475a8">2</div><div class="cl" style="left:189.5px;top:704.7px;color:#5475a8">v</div><div class="cr" style="left:232px;width:39px;top:704.3px;color:#5475a8">2</div><div class="cr" style="left:279px;width:38px;top:704.3px;color:#5475a8">2</div><div class="cr" style="left:325px;width:112px;top:704.3px;color:#3d3d3d">1</div><div class="cr" style="left:445px;width:105px;top:704.3px;color:#3d3d3d">9</div><div class="cc" style="left:0;width:27px;top:729.3px;color:#5f5f5f">23</div><div class="cr" style="left:30px;width:41px;top:729.3px;color:#5475a8">23</div><div class="cr" style="left:79px;width:42px;top:729.3px;color:#5475a8">3</div><div class="cr" style="left:129px;width:44px;top:729.3px;color:#5475a8">3</div><div class="cl" style="left:189.5px;top:729.7px;color:#5475a8">z</div><div class="cr" style="left:232px;width:39px;top:729.3px;color:#5475a8">3</div><div class="cr" style="left:279px;width:38px;top:729.3px;color:#5475a8">3</div><div class="cr" style="left:325px;width:112px;top:729.3px;color:#3d3d3d">0</div><div class="cr" style="left:445px;width:105px;top:729.3px;color:#3d3d3d">8</div><div class="cc" style="left:0;width:27px;top:754.3px;color:#5f5f5f">24</div><div class="cr" style="left:30px;width:41px;top:754.3px;color:#5475a8">24</div><div class="cr" style="left:79px;width:42px;top:754.3px;color:#5475a8">1</div><div class="cr" style="left:129px;width:44px;top:754.3px;color:#5475a8">1</div><div class="cl" style="left:189.5px;top:754.7px;color:#5475a8">a</div><div class="cr" style="left:232px;width:39px;top:754.3px;color:#5475a8">1</div><div class="cr" style="left:279px;width:38px;top:754.3px;color:#5475a8">1</div><div class="cr" style="left:325px;width:112px;top:754.3px;color:#3d3d3d">0</div><div class="cr" style="left:445px;width:105px;top:754.3px;color:#3d3d3d">7</div><div class="cc" style="left:0;width:27px;top:779.3px;color:#5f5f5f">25</div><div class="cr" style="left:30px;width:41px;top:779.3px;color:#5475a8">25</div><div class="cr" style="left:129px;width:44px;top:779.3px;color:#5475a8">2</div><div class="cl" style="left:189.5px;top:779.7px;color:#5475a8">b</div><div class="cr" style="left:232px;width:39px;top:779.3px;color:#5475a8">2</div><div class="cr" style="left:279px;width:38px;top:779.3px;color:#5475a8">2</div><div class="cr" style="left:325px;width:112px;top:779.3px;color:#3d3d3d">0</div><div class="cr" style="left:445px;width:105px;top:779.3px;color:#3d3d3d">6</div><div class="cc" style="left:0;width:27px;top:805.3px;color:#5f5f5f">26</div><div class="cr" style="left:30px;width:41px;top:805.3px;color:#5475a8">26</div><div class="cr" style="left:79px;width:42px;top:805.3px;color:#5475a8">3</div><div class="cr" style="left:129px;width:44px;top:805.3px;color:#5475a8">3</div><div class="cl" style="left:189.5px;top:805.7px;color:#5475a8">c</div><div class="cr" style="left:232px;width:39px;top:805.3px;color:#5475a8">3</div><div class="cr" style="left:279px;width:38px;top:805.3px;color:#5475a8">3</div><div class="cr" style="left:325px;width:112px;top:805.3px;color:#3d3d3d">0</div><div class="cr" style="left:445px;width:105px;top:805.3px;color:#3d3d3d">5</div><div class="cc" style="left:0;width:27px;top:830.3px;color:#5f5f5f">27</div><div class="cr" style="left:30px;width:41px;top:830.3px;color:#5475a8">27</div><div class="cr" style="left:79px;width:42px;top:830.3px;color:#5475a8">4</div><div class="cl" style="left:189.5px;top:830.7px;color:#5475a8">d</div><div class="cr" style="left:232px;width:39px;top:830.3px;color:#5475a8">4</div><div class="cr" style="left:279px;width:38px;top:830.3px;color:#5475a8">4</div><div class="cr" style="left:325px;width:112px;top:830.3px;color:#3d3d3d">1</div><div class="cr" style="left:445px;width:105px;top:830.3px;color:#3d3d3d">4</div><div class="cc" style="left:0;width:27px;top:856.3px;color:#5f5f5f">28</div><div class="cr" style="left:30px;width:41px;top:856.3px;color:#5475a8">28</div><div class="cr" style="left:79px;width:42px;top:856.3px;color:#5475a8">5</div><div class="cr" style="left:129px;width:44px;top:856.3px;color:#5475a8">5</div><div class="cl" style="left:189.5px;top:856.7px;color:#5475a8">e</div><div class="cr" style="left:232px;width:39px;top:856.3px;color:#5475a8">5</div><div class="cr" style="left:279px;width:38px;top:856.3px;color:#5475a8">5</div><div class="cr" style="left:325px;width:112px;top:856.3px;color:#3d3d3d">0</div><div class="cr" style="left:445px;width:105px;top:856.3px;color:#3d3d3d">3</div><div class="cc" style="left:0;width:27px;top:881.3px;color:#5f5f5f">29</div><div class="cr" style="left:30px;width:41px;top:881.3px;color:#5475a8">29</div><div class="cr" style="left:79px;width:42px;top:881.3px;color:#5475a8">6</div><div class="cr" style="left:129px;width:44px;top:881.3px;color:#5475a8">6</div><div class="cr" style="left:325px;width:112px;top:881.3px;color:#3d3d3d">2</div><div class="cr" style="left:445px;width:105px;top:881.3px;color:#3d3d3d">2</div><div class="cc" style="left:0;width:27px;top:906.3px;color:#5f5f5f">30</div><div class="cr" style="left:30px;width:41px;top:906.3px;color:#5475a8">30</div><div class="cr" style="left:79px;width:42px;top:906.3px;color:#5475a8">7</div><div class="cr" style="left:129px;width:44px;top:906.3px;color:#5475a8">7</div><div class="cl" style="left:189.5px;top:906.7px;color:#5475a8">g</div><div class="cr" style="left:232px;width:39px;top:906.3px;color:#5475a8">7</div><div class="cr" style="left:279px;width:38px;top:906.3px;color:#5475a8">7</div><div class="cr" style="left:325px;width:112px;top:906.3px;color:#3d3d3d">0</div><div class="cr" style="left:445px;width:105px;top:906.3px;color:#3d3d3d">1</div><div style="position:absolute;left:0;top:929px;width:30px;height:14px;overflow:hidden"><div class="cc" style="left:0;width:27px;top:3.3px;color:#bbb">31</div></div><div class="abs" style="left:567px;top:169px;width:17px;height:774px;background:#f0f0f0"></div><div class="abs" style="left:569px;top:186px;width:13px;height:283px;background:#c1c1c1"></div><svg class="abs" style="left:567px;top:169px" width="17" height="774"><path d="M4.3 11.2L8.5 6.8L12.7 11.2Z" fill="#a3a3a3"/><path d="M4.5 762.5L8.7 767L12.9 762.5Z" fill="#505050"/></svg><div class="abs" style="left:0;top:943px;width:567px;height:17px;background:#f0f0f0"></div><div class="abs" style="left:15px;top:945px;width:262px;height:13px;background:#c1c1c1"></div><div class="abs" style="left:566px;top:942px;width:18px;height:18px;background:#dcdcdc"></div><svg class="abs" style="left:0;top:943px" width="567" height="17"><path d="M9 4.5L4.5 8.5L9 12.5Z" fill="#a3a3a3"/><path d="M557 4.5L562 8.5L557 12.5Z" fill="#505050"/></svg><div class="abs" style="left:584px;top:168px;width:1px;height:793px;background:#a8a8a8"></div><svg class="abs" style="left:428px;top:143px" width="130" height="16"><circle cx="7.2" cy="7.3" r="3.6" fill="#b9b9b9"/><circle cx="119.4" cy="7.3" r="3.6" fill="#b9b9b9"/></svg><div class="abs" style="left:0;top:960px;width:585px;height:1px;background:#a8a8a8"></div><div class="t" style="left:9.3px;top:968.33px;font-size:11.6px;color:#555;">Ready</div><svg class="abs" style="left:0;top:960px" width="120" height="27"><path fill-rule="evenodd" fill="#8a8a8a" d="M59.9 6H76.1L69.6 16.8V23.2L66.2 20.6V16.8ZM62.7 7.5H73.3L70.9 11.3H65.1Z"/></svg><svg class="abs" style="left:0;top:960px" width="120" height="27"><path d="M90.6 15C95 8.7 102.6 8.7 107 15C102.6 21.3 95 21.3 90.6 15Z" fill="none" stroke="#8a8a8a" stroke-width="1.5" stroke-linejoin="round"/><circle cx="98.8" cy="14.9" r="2.9" fill="#8a8a8a"/></svg><div class="t" style="left:126px;top:968.24px;font-size:11.7px;color:#555;">Filters 0</div><div class="t" style="left:190px;top:968.24px;font-size:11.7px;color:#555;">Row count ...</div><div class="t" style="left:281px;top:968.24px;font-size:11.7px;color:#555;">Filtere...</div><div class="t" style="left:350px;top:968.24px;font-size:11.7px;color:#555;">Delete...</div><div class="t" style="left:421px;top:968.24px;font-size:11.7px;color:#555;">Added ...</div><div class="t" style="left:493px;top:968.24px;font-size:11.7px;color:#555;">Cells edited ...</div><div class="abs" style="left:600px;top:143px;width:707px;height:844px;border-left:1px solid #a9a9a9;border-top:1px solid #bdbdbd;border-right:1px solid #a9a9a9;background:#e6e6e6"></div><div class="t" style="left:621.5px;top:171.08px;font-size:22.3px;color:#444;">Rj Editor</div><svg class="abs" style="left:1228px;top:154px" width="56" height="56"><circle cx="27.8" cy="27.7" r="22.3" fill="none" stroke="#555" stroke-width="2.8"/><path d="M15.8 27.2H39.5M29.4 17.4L39.5 27.2L29.4 36.5" fill="none" stroke="#555" stroke-width="2.8" stroke-linecap="round" stroke-linejoin="round"/></svg><div class="abs" style="left:601px;top:217px;width:704px;height:2px;background:linear-gradient(90deg,rgba(200,200,200,0),#c4c4c4 30%,#bdbdbd)"></div><div class="abs" style="left:621px;top:237px;width:666px;height:31px;background:#d9d9d9;border:1px solid #bcbcbc"></div><svg class="abs" style="left:630px;top:245px" width="20" height="16"><path d="M3.8 5.5L9.2 11L14.6 5.5" fill="none" stroke="#555" stroke-width="1.8"/></svg><div class="abs" style="left:656px;top:242px;width:1px;height:21px;background:#666"></div><div class="t" style="left:663.3px;top:245.56px;font-size:14.5px;color:#555;">Variables</div><div class="abs" style="left:621px;top:279px;width:301px;height:241px;background:#fff;border:1px solid #a3a3a3"></div><div class="abs" style="left:627.59px;top:283.05px"><svg width="23.60" height="21.24" viewBox="0 0 20 18" style="display:block"><circle cx="5.6" cy="12.5" r="4.4" fill="#a9c8f3" stroke="#4a88e4" stroke-width="1"/><circle cx="13.5" cy="12.5" r="4.4" fill="#6b9de6" stroke="#3f7fe0" stroke-width="1"/><circle cx="9.5" cy="5.3" r="4.4" fill="#f0c062" stroke="#d9982e" stroke-width="1"/></svg></div><div class="t" style="left:655.5px;top:287.66px;font-size:14.5px;color:#333;">B</div><div class="abs" style="left:627.59px;top:311.55px"><svg width="23.60" height="21.24" viewBox="0 0 20 18" style="display:block"><circle cx="5.6" cy="12.5" r="4.4" fill="#a9c8f3" stroke="#4a88e4" stroke-width="1"/><circle cx="13.5" cy="12.5" r="4.4" fill="#6b9de6" stroke="#3f7fe0" stroke-width="1"/><circle cx="9.5" cy="5.3" r="4.4" fill="#f0c062" stroke="#d9982e" stroke-width="1"/></svg></div><div class="t" style="left:655.5px;top:316.16px;font-size:14.5px;color:#333;">E</div><div class="abs" style="left:627.59px;top:340.55px"><svg width="23.60" height="23.60" viewBox="0 0 20 20" style="display:block"><g transform="rotate(-45 10 10)"><rect x="1.5" y="6.5" width="17" height="7" fill="#dedede" stroke="#cfcfcf"/><path d="M5 6.5v3M8 6.5v2M11 6.5v3M14 6.5v2" stroke="#c0c0c0" stroke-width="0.8"/></g></svg></div><div class="t" style="left:655.5px;top:345.16px;font-size:14.5px;color:#a3a3a3;">counts_na</div><div class="abs" style="left:627.59px;top:369.75px"><svg width="23.60" height="21.24" viewBox="0 0 20 18" style="display:block"><circle cx="5.6" cy="12.5" r="4.4" fill="#dcdcdc" stroke="#c4c4c4" stroke-width="1"/><circle cx="13.5" cy="12.5" r="4.4" fill="#c8c8c8" stroke="#bdbdbd" stroke-width="1"/><circle cx="9.5" cy="5.3" r="4.4" fill="#d6d6d6" stroke="#c4c4c4" stroke-width="1"/></svg></div><div class="t" style="left:655.5px;top:374.36px;font-size:14.5px;color:#a3a3a3;">sortdec_A</div><svg class="abs" style="left:893px;top:284px" width="24" height="24"><circle cx="10.9" cy="8.7" r="6.2" fill="none" stroke="#555" stroke-width="1.7"/><path d="M15.3 13.1L20.3 18" stroke="#555" stroke-width="2.2" stroke-linecap="round"/></svg><div class="abs" style="left:934px;top:297px;width:40px;height:34px;background:#f9f9f9;border:1px solid #c4c4c4"></div><svg class="abs" style="left:934px;top:297px" width="40" height="34"><path d="M12.8 17H26.5M21.2 11.6L26.5 17L21.2 22.4" fill="none" stroke="#3a3a3a" stroke-width="1.9"/></svg><div class="t" style="left:986.8px;top:279.86px;font-size:14.5px;color:#333;">Variables</div><div class="abs" style="left:986px;top:297px;width:301px;height:223px;background:#fff;border:1px solid #a3a3a3"></div><div class="abs" style="left:993.39px;top:301.05px"><svg width="23.60" height="21.24" viewBox="0 0 20 18" style="display:block"><circle cx="5.6" cy="12.5" r="4.4" fill="#a9c8f3" stroke="#4a88e4" stroke-width="1"/><circle cx="13.5" cy="12.5" r="4.4" fill="#6b9de6" stroke="#3f7fe0" stroke-width="1"/><circle cx="9.5" cy="5.3" r="4.4" fill="#f0c062" stroke="#d9982e" stroke-width="1"/></svg></div><div class="t" style="left:1020px;top:305.86px;font-size:14.5px;color:#333;">A</div><div class="abs" style="left:993.39px;top:330.65px"><svg width="23.60" height="21.24" viewBox="0 0 20 18" style="display:block"><circle cx="5.6" cy="12.5" r="4.4" fill="#a9c8f3" stroke="#4a88e4" stroke-width="1"/><circle cx="13.5" cy="12.5" r="4.4" fill="#6b9de6" stroke="#3f7fe0" stroke-width="1"/><circle cx="9.5" cy="5.3" r="4.4" fill="#f0c062" stroke="#d9982e" stroke-width="1"/></svg></div><div class="t" style="left:1020px;top:335.46px;font-size:14.5px;color:#333;">C</div><div class="abs" style="left:993.39px;top:359.05px"><svg width="23.60" height="21.24" viewBox="0 0 20 18" style="display:block"><circle cx="5.6" cy="12.5" r="4.4" fill="#a9c8f3" stroke="#4a88e4" stroke-width="1"/><text x="11.2" y="17" font-family="Liberation Sans" font-weight="bold" font-size="11.5" fill="#3f80e2">a</text><circle cx="9.5" cy="5.3" r="4.4" fill="#f0c062" stroke="#d9982e" stroke-width="1"/></svg></div><div class="t" style="left:1020px;top:363.86px;font-size:14.5px;color:#333;">D</div><div class="abs" style="left:993.39px;top:387.85px"><svg width="23.60" height="21.24" viewBox="0 0 20 18" style="display:block"><circle cx="5.6" cy="12.5" r="4.4" fill="#a9c8f3" stroke="#4a88e4" stroke-width="1"/><circle cx="13.5" cy="12.5" r="4.4" fill="#6b9de6" stroke="#3f7fe0" stroke-width="1"/><circle cx="9.5" cy="5.3" r="4.4" fill="#f0c062" stroke="#d9982e" stroke-width="1"/></svg></div><div class="t" style="left:1020px;top:392.66px;font-size:14.5px;color:#333;">F</div><div class="abs" style="left:621px;top:550px;width:666px;height:430px;background:#fff;border:1px solid #a9a9a9"></div><div class="abs" style="left:622px;top:551px;width:48px;height:428px;background:#f0f0f0"></div><div class="abs" style="left:622px;top:551px;width:48px;height:14px;background:#dadada"></div><style>.code{font-family:"Liberation Mono",monospace;font-size:12px;line-height:14.1px;color:#333;white-space:pre}.code .g{color:#9a9a9a}.code .p{color:#7b8a9c}.code .b{color:#2626f5}.code .c{color:#6470f0}</style><div class="abs code" style="left:675px;top:552.8px"><span class="k">df</span> <span class="g">&lt;-</span> data<span class="p">[]</span>

<span class="b">for</span><span class="p">(</span>nr <span class="b">in</span> <span class="b">1</span><span class="g">:</span>nrow<span class="p">(</span>df<span class="p">))</span>
   df<span class="p">$</span>cna<span class="p">[</span>nr<span class="p">]</span> <span class="g">&lt;-</span> sum<span class="p">(</span>is.na<span class="p">(</span>df<span class="p">[</span>nr,<span class="p">]))</span>

data <span class="g">&lt;-</span> cbind<span class="p">(</span>data, counts_na <span class="g">=</span> df<span class="p">$</span>cna,  sortdec_A <span class="g">=</span> sort<span class="p">(</span>data<span class="p">$</span>A, decreasing <span class="g">=</span> <span class="c">T</span><span class="p">))</span>
</div><div class="abs code" style="left:622px;top:552.8px;width:33px;text-align:right;color:#555">1
2
3
4
5
6
7</div><div class="abs" style="left:675px;top:551px;width:1px;height:14px;background:#aaa"></div><svg class="abs" style="left:1205px;top:555px" width="24" height="24"><path fill-rule="evenodd" d="M9.83 5.61L10.28 2.84L13.52 2.84L13.97 5.61L15.17 6.11L17.44 4.46L19.74 6.76L18.09 9.03L18.59 10.23L21.36 10.68L21.36 13.92L18.59 14.37L18.09 15.57L19.74 17.84L17.44 20.14L15.17 18.49L13.97 18.99L13.52 21.76L10.28 21.76L9.83 18.99L8.63 18.49L6.36 20.14L4.06 17.84L5.71 15.57L5.21 14.37L2.44 13.92L2.44 10.68L5.21 10.23L5.71 9.03L4.06 6.76L6.36 4.46L8.63 6.11ZM8.00 12.3a3.9 3.9 0 1 0 7.8 0a3.9 3.9 0 1 0 -7.8 0Z" fill="#d6d9e7" stroke="#c3c7da" stroke-width="0.9" stroke-linejoin="round"/></svg><svg class="abs" style="left:1237px;top:558px" width="17" height="19"><path d="M0.2 0.4L15.5 9.3L0.2 18.2Z" fill="#2a8a2e"/></svg><div class="t" style="left:1095.9px;top:958.54px;font-size:15.5px;color:#444;">Ctrl + Shift + Enter to run</div><svg class="abs" style="left:588.4px;top:556px" width="8" height="24"><circle cx="4" cy="5.5" r="2.3" fill="#c4c4c4"/><circle cx="4" cy="12" r="2.3" fill="#c4c4c4"/><circle cx="4" cy="18.3" r="2.3" fill="#c4c4c4"/></svg><svg class="abs" style="left:1309.4px;top:556px" width="8" height="24"><circle cx="4" cy="5.5" r="2.3" fill="#c4c4c4"/><circle cx="4" cy="12" r="2.3" fill="#c4c4c4"/><circle cx="4" cy="18.3" r="2.3" fill="#c4c4c4"/></svg><div class="abs" style="left:1321px;top:143px;width:140px;height:844px;border-left:1px solid #a9a9a9;border-top:1px solid #bdbdbd;background:#e6e6e6"></div><div class="t" style="left:1350px;top:167.48px;font-size:21px;color:#3e6da9;font-weight:bold">Results</div><div class="abs" style="left:1325px;top:222px;width:130px;height:74px;background:#fff"></div><div class="t" style="left:1350px;top:241.76px;font-size:22px;color:#3e6da9;font-weight:bold">R</div><div class="abs" style="left:1322px;top:970px;width:133px;height:17px;background:#f0f0f0"></div><div class="abs" style="left:1339px;top:972px;width:116px;height:13px;background:#c1c1c1"></div><svg class="abs" style="left:1322px;top:970px" width="17" height="17"><path d="M10 5L6 8.5L10 12Z" fill="#a3a3a3"/></svg><div class="abs" style="left:893px;top:122px;width:120px;height:115px;background:#fff;border:1px solid #d4d4d4;box-shadow:0 1px 3px rgba(0,0,0,.15)"></div><div class="abs" style="left:896px;top:132px;width:115px;height:25px;background:#e8e8e8"></div><div class="t" style="left:905px;top:138px;font-size:11px;color:#888">Rj</div><div class="t" style="left:917.5px;top:175.74px;font-size:13px;color:#444;">Rj Editor</div><div class="abs" style="left:895px;top:197px;width:117px;height:36px;background:#d0dced;border:2px solid #46546a;border-radius:4px"></div><div class="t" style="left:917.5px;top:208.54px;font-size:13px;color:#444;">Rj Editor +</div></body></html>
